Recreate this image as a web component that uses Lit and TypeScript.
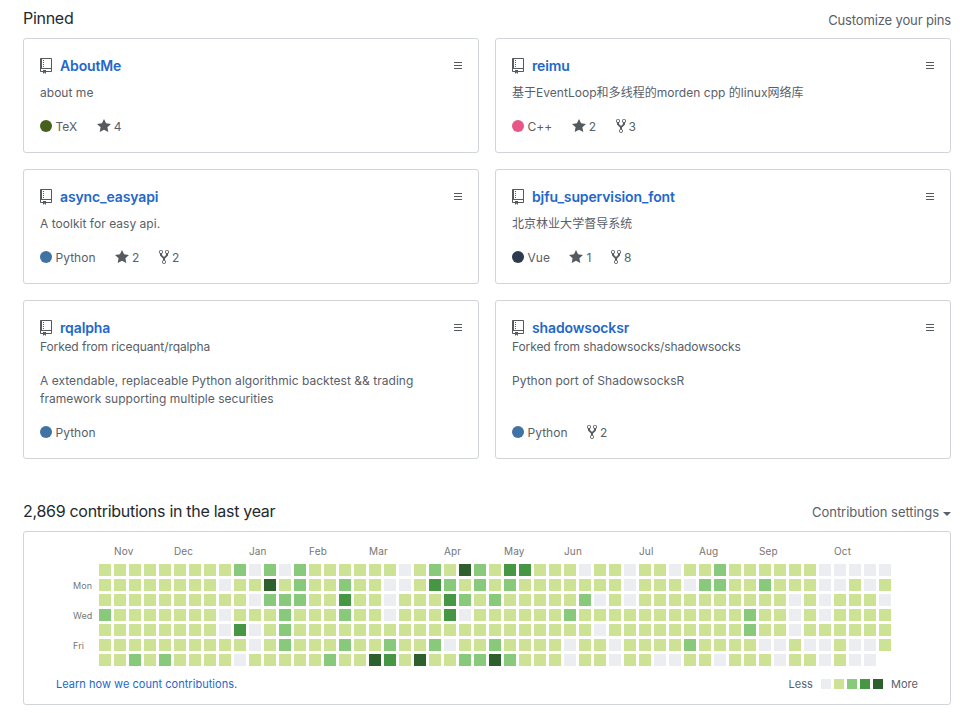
import { LitElement, html, css, svg, nothing } from "lit";
import { customElement, property } from "lit/decorators.js";

interface Repo {
  name: string;
  description: string;
  language: string;
  color: string;
  forkedFrom?: string;
  stars?: number;
  forks?: number;
}

const REPOS: Repo[] = [
  { name: "AboutMe", description: "about me", language: "TeX", color: "#46611f", stars: 4 },
  { name: "reimu", description: "基于EventLoop和多线程的morden cpp 的linux网络库", language: "C++", color: "#e65686", stars: 2, forks: 3 },
  { name: "async_easyapi", description: "A toolkit for easy api.", language: "Python", color: "#4072a4", stars: 2, forks: 2 },
  { name: "bjfu_supervision_font", description: "北京林业大学督导系统", language: "Vue", color: "#2d3b4e", stars: 1, forks: 8 },
  { name: "rqalpha", forkedFrom: "ricequant/rqalpha", description: "A extendable, replaceable Python algorithmic backtest && trading framework supporting multiple securities", language: "Python", color: "#4072a4" },
  { name: "shadowsocksr", forkedFrom: "shadowsocks/shadowsocks", description: "Python port of ShadowsocksR", language: "Python", color: "#4072a4", forks: 2 },
];

// One string per weekday, one digit (contribution level) per week.
const LEVELS = [
  "11111111120202" + "1111110121421" + "33111011011011" + "211111100000",
  "11111111011412" + "1121100132121" + "21111111011102" + "211211100101",
  "11111111110222" + "1131101113212" + "11111201011111" + "111110101110",
  "21111111011121" + "1121101113011" + "11112111111111" + "112110101111",
  "11111111030121" + "1111111111111" + "11111101111111" + "112110111111",
  "11111111110121" + "1121121120112" + "11110110111121" + "111001001001",
  "11212111101111" + "1211431411224" + "21110110110011" + "01110110100",
];

const MONTHS: [string, number][] = [
  ["Nov", 1], ["Dec", 5], ["Jan", 10], ["Feb", 14], ["Mar", 18], ["Apr", 23],
  ["May", 27], ["Jun", 31], ["Jul", 36], ["Aug", 40], ["Sep", 44], ["Oct", 49],
];

const ICONS = {
  repo: {
    width: 12,
    d: "M4 9H3V8h1v1zm0-3H3v1h1V6zm0-2H3v1h1V4zm0-2H3v1h1V2zm8-1v12c0 .55-.45 1-1 1H6v2l-1.5-1.5L3 16v-2H1c-.55 0-1-.45-1-1V1c0-.55.45-1 1-1h10c.55 0 1 .45 1 1zm-1 10H1v2h2v-1h3v1h5v-2zm0-10H2v9h9V1z",
  },
  star: { width: 14, d: "M14 6l-4.9-.64L7 1 4.9 5.36 0 6l3.6 3.26L2.67 14 7 11.67 11.33 14l-.93-4.74L14 6z" },
  fork: {
    width: 10,
    d: "M8 1a1.993 1.993 0 0 0-1 3.72V6L5 8 3 6V4.72A1.993 1.993 0 0 0 2 1a1.993 1.993 0 0 0-1 3.72V6.5l3 3v1.78A1.993 1.993 0 0 0 5 15a1.993 1.993 0 0 0 1-3.72V9.5l3-3V4.72A1.993 1.993 0 0 0 8 1zM2 4.2C1.34 4.2.8 3.65.8 3c0-.65.55-1.2 1.2-1.2.65 0 1.2.55 1.2 1.2 0 .65-.55 1.2-1.2 1.2zm3 10c-.66 0-1.2-.55-1.2-1.2 0-.65.55-1.2 1.2-1.2.65 0 1.2.55 1.2 1.2 0 .65-.55 1.2-1.2 1.2zm3-10c-.66 0-1.2-.55-1.2-1.2 0-.65.55-1.2 1.2-1.2.65 0 1.2.55 1.2 1.2 0 .65-.55 1.2-1.2 1.2z",
  },
  grabber: { width: 8, d: "M8 4v1H0V4h8zM0 8h8V7H0v1zm0 3h8v-1H0v1z" },
};

const icon = (name: keyof typeof ICONS) => {
  const { width, d } = ICONS[name];
  return html`<svg class="icon" width=${width} height="16" viewBox="0 0 ${width} 16" aria-hidden="true">
    ${svg`<path fill-rule="evenodd" d=${d}></path>`}
  </svg>`;
};

@customElement("repo-card")
class RepoCard extends LitElement {
  @property({ attribute: false }) repo!: Repo;

  static styles = css`
    :host {
      display: flex;
      flex-direction: column;
      box-sizing: border-box;
      padding: 16px;
      border: 1px solid #d1d4d8;
      border-radius: 3px;
      color: #586069;
      font-size: 12px;
      line-height: 18px;
      letter-spacing: 0.03px;
    }
    .icon { display: block; fill: currentColor; flex: none; }
    .head { display: flex; align-items: center; height: 21px; color: #555a5f; }
    .name {
      margin-left: 8px;
      flex: 1;
      font-size: 14px;
      font-weight: 600;
      line-height: 21px;
      letter-spacing: -0.13px;
      color: #2467c9;
      text-decoration: none;
    }
    .forked { letter-spacing: -0.09px; }
    .desc { margin: 8px 0 16px; flex: 1; }
    .forked + .desc { margin-top: 16px; }
    .meta { display: flex; height: 18px; }
    .item { display: flex; align-items: center; margin-right: 19.5px; }
    .item .icon { margin: -2px 3px 0 0; color: #555a5f; }
    .dot { width: 12px; height: 12px; border-radius: 50%; margin: -2px 3.5px 0 0; }
  `;

  render() {
    const r = this.repo;
    return html`
      <div class="head">
        ${icon("repo")}<a class="name">${r.name}</a>${icon("grabber")}
      </div>
      ${r.forkedFrom ? html`<div class="forked">Forked from ${r.forkedFrom}</div>` : nothing}
      <div class="desc">${r.description}</div>
      <div class="meta">
        <span class="item"><span class="dot" style="background:${r.color}"></span>${r.language}</span>
        ${r.stars ? html`<span class="item">${icon("star")}${r.stars}</span>` : nothing}
        ${r.forks ? html`<span class="item">${icon("fork")}${r.forks}</span>` : nothing}
      </div>
    `;
  }
}

@customElement("contribution-calendar")
class ContributionCalendar extends LitElement {
  static styles = css`
    :host {
      display: block;
      box-sizing: border-box;
      height: 174px;
      border: 1px solid #d1d4d8;
      border-radius: 3px;
      padding: 12px 32px 0;
      color: #767676;
      font-size: 10px;
    }
    .months {
      display: grid;
      grid-template-columns: repeat(53, 12px);
      column-gap: 3px;
      margin-left: 43px;
      height: 20px;
      line-height: 15px;
      letter-spacing: 0.15px;
    }
    .month { grid-row: 1; width: 0; white-space: nowrap; }
    .body { display: flex; height: 102px; }
    .days { width: 26px; padding: 16px 0 0 17px; font-size: 9px; line-height: 12px; letter-spacing: 0.1px; }
    .day { height: 30px; }
    .weeks {
      display: grid;
      grid-template-columns: repeat(53, 12px);
      grid-auto-rows: 12px;
      gap: 3px;
    }
    .l0 { background: #ebedf0; }
    .l1 { background: #cee295; }
    .l2 { background: #89c97b; }
    .l3 { background: #479644; }
    .l4 { background: #2e602e; }
    .foot {
      display: flex;
      justify-content: space-between;
      align-items: center;
      height: 16px;
      margin-top: 10px;
      font-size: 11px;
      letter-spacing: 0.03px;
      color: #586069;
    }
    .learn { color: #2467c9; }
    .legend { display: flex; align-items: center; }
    .swatches { display: flex; gap: 3px; margin: 0 8px; }
    .swatch { width: 10px; height: 10px; }
  `;

  render() {
    return html`
      <div class="months">
        ${MONTHS.map(([m, c]) => html`<span class="month" style="grid-column:${c + 1}">${m}</span>`)}
      </div>
      <div class="body">
        <div class="days">
          <div class="day">Mon</div><div class="day">Wed</div><div class="day">Fri</div>
        </div>
        <div class="weeks">
          ${LEVELS.map((row) => [...row].map((l) => html`<span class="l${l}"></span>`))}
        </div>
      </div>
      <div class="foot">
        <a class="learn">Learn how we count contributions.</a>
        <div class="legend">
          <span class="less">Less</span>
          <div class="swatches">${[0, 1, 2, 3, 4].map((l) => html`<span class="swatch l${l}"></span>`)}</div>
          <span class="more">More</span>
        </div>
      </div>
    `;
  }
}

@customElement("app-root")
class AppRoot extends LitElement {
  static styles = css`
    :host {
      display: block;
      box-sizing: border-box;
      height: 713px;
      padding: 0 9px 0 23px;
      background: #fff;
      color: #24292e;
      font-family: Inter, "Noto Sans CJK SC", sans-serif;
      overflow: hidden;
    }
    .bar { display: flex; justify-content: space-between; align-items: flex-start; }
    .pins-bar { height: 32px; padding-top: 6px; }
    .year-bar { height: 32px; padding-top: 40px; }
    .title { margin: 0; font-size: 16px; font-weight: 400; line-height: 24px; letter-spacing: -0.29px; }
    .action { display: flex; align-items: center; margin-top: 4px; font-size: 13px; line-height: 20px; letter-spacing: -0.14px; color: #586069; }
    .year-bar .action { margin-top: 3px; letter-spacing: -0.05px; }
    .caret { margin-left: 4px; margin-top: 3px; border: 4px solid transparent; border-top-color: currentColor; border-bottom: 0; }
    .pins { display: grid; grid-template-columns: 1fr 1fr; gap: 16px; }
  `;

  render() {
    return html`
      <div class="bar pins-bar">
        <h2 class="title">Pinned</h2>
        <a class="action">Customize your pins</a>
      </div>
      <div class="pins">${REPOS.map((r) => html`<repo-card .repo=${r}></repo-card>`)}</div>
      <div class="bar year-bar">
        <h2 class="title">2,869 contributions in the last year</h2>
        <a class="action">Contribution settings<span class="caret"></span></a>
      </div>
      <contribution-calendar></contribution-calendar>
    `;
  }
}
